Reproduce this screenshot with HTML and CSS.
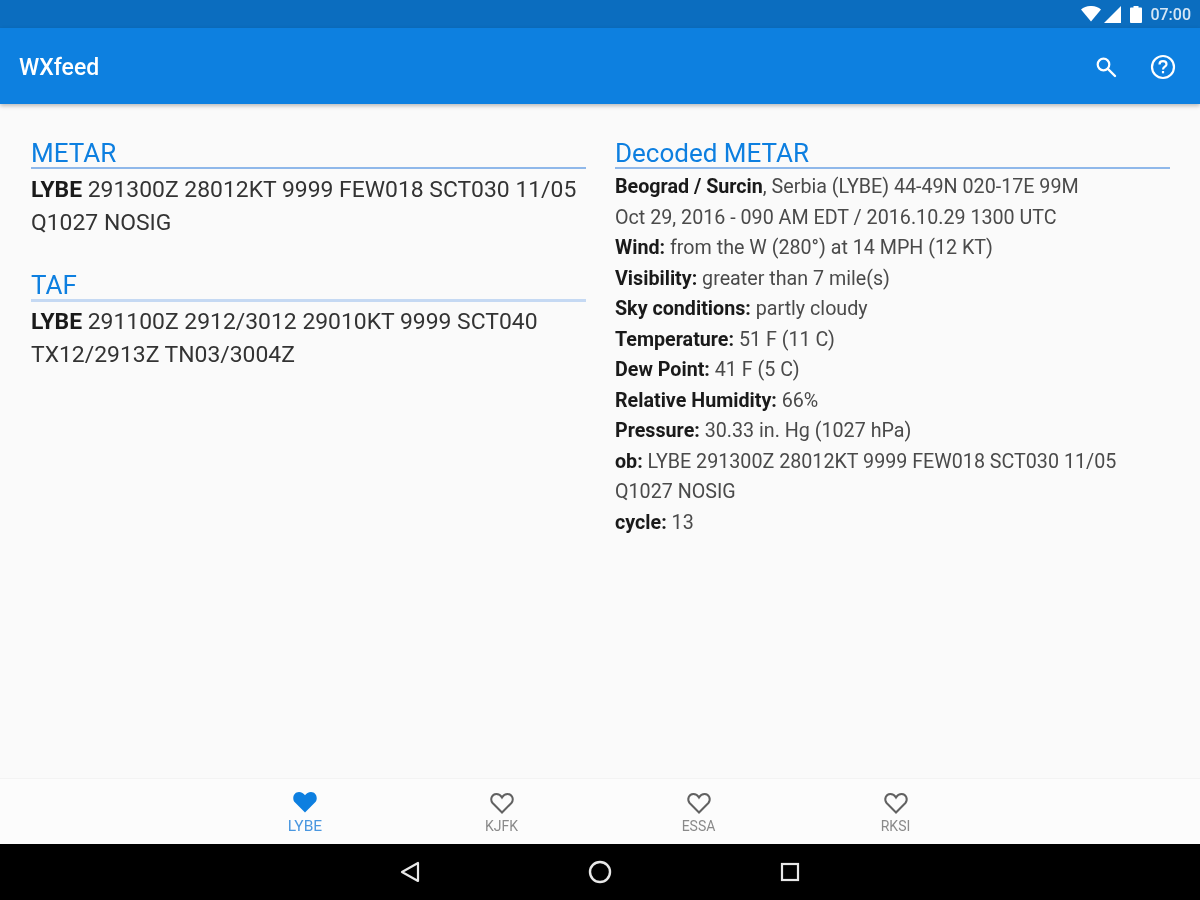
FILE: index.html
```html
<!DOCTYPE html>
<html lang="en">
<head>
<meta charset="utf-8">
<title>WXfeed</title>
<link rel="stylesheet" href="styles.css">
</head>
<body>
<div class="screen">
  <div class="statusbar">
    <svg class="st-wifi" width="20" height="16" viewBox="0 0 20 16"><path d="M0 3.500C5.500-1.200 14.500-1.200 20 3.500L10 15.500Z" fill="#fff"/></svg>
    <svg class="st-signal" width="17" height="17" viewBox="0 0 17 17"><path d="M0 17L17 0V17Z" fill="#fff"/></svg>
    <svg class="st-batt" width="12" height="18" viewBox="0 0 12 18"><path d="M0 3.500C0 3 .5 2.500 1 2.500H3.500V1H8.500V2.500H11C11.500 2.500 12 3 12 3.500V17C12 17.500 11.500 18 11 18H1C.5 18 0 17.500 0 17Z" fill="#fff"/></svg>
    <span class="st-time">07:00</span>
  </div>
  <header class="appbar">
    <div class="title">WXfeed</div>
    <div class="actions">
      <svg width="24" height="24" viewBox="0 0 24 24"><circle cx="9.500" cy="9.500" r="5.800" fill="none" stroke="#fff" stroke-width="2.200"/><path d="M14 14L21 21" stroke="#fff" stroke-width="2.400" stroke-linecap="round"/></svg>
      <svg width="26" height="26" viewBox="0 0 26 26"><circle cx="13" cy="13" r="11" fill="none" stroke="#fff" stroke-width="2.200"/><path d="M9.500 10.500C9.500 8.500 11 7.200 13 7.200C15 7.200 16.500 8.500 16.500 10.300C16.500 12.700 13 12.800 13 15.500" fill="none" stroke="#fff" stroke-width="2.200"/><rect x="11.900" y="17" width="2.200" height="2.300" fill="#fff"/></svg>
    </div>
  </header>
  <main class="content">
    <section class="col">
      <h2 class="head">METAR</h2>
      <p class="raw"><b>LYBE</b> 291300Z 28012KT 9999 FEW018 SCT030 11/05 Q1027 NOSIG</p>
      <h2 class="head head-next">TAF</h2>
      <p class="raw"><b>LYBE</b> 291100Z 2912/3012 29010KT 9999 SCT040 TX12/2913Z TN03/3004Z</p>
    </section>
    <section class="col">
      <h2 class="head">Decoded METAR</h2>
      <div class="decoded">
        <div><b>Beograd / Surcin</b>, Serbia (LYBE) 44-49N 020-17E 99M</div>
        <div>Oct 29, 2016 - 090 AM EDT / 2016.10.29 1300 UTC</div>
        <div><b>Wind:</b> from the W (280°) at 14 MPH (12 KT)</div>
        <div><b>Visibility:</b> greater than 7 mile(s)</div>
        <div><b>Sky conditions:</b> partly cloudy</div>
        <div><b>Temperature:</b> 51 F (11 C)</div>
        <div><b>Dew Point:</b> 41 F (5 C)</div>
        <div><b>Relative Humidity:</b> 66%</div>
        <div><b>Pressure:</b> 30.33 in. Hg (1027 hPa)</div>
        <div><b>ob:</b> LYBE 291300Z 28012KT 9999 FEW018 SCT030 11/05 Q1027 NOSIG</div>
        <div><b>cycle:</b> 13</div>
      </div>
    </section>
  </main>
  <nav class="tabs">
    <div class="tab active">
      <svg width="26" height="24" viewBox="0 0 26 24"><path d="M13 22.500L2.800 12.300C-.5 8.500 1.800 2 7 2C9.500 2 11.700 3.300 13 5.200C14.300 3.300 16.500 2 19 2C24.200 2 26.500 8.500 23.200 12.300Z" fill="#0d7fe0"/></svg>
      <span>LYBE</span>
    </div>
    <div class="tab">
      <svg width="26" height="24" viewBox="0 0 26 24"><path d="M13 21.500L3.600 12C.8 8.600 2.800 3 7.300 3C9.700 3 11.800 4.400 13 6.500C14.200 4.400 16.300 3 18.700 3C23.200 3 25.200 8.600 22.400 12Z" fill="none" stroke="#616161" stroke-width="2"/></svg>
      <span>KJFK</span>
    </div>
    <div class="tab">
      <svg width="26" height="24" viewBox="0 0 26 24"><path d="M13 21.500L3.600 12C.8 8.600 2.800 3 7.300 3C9.700 3 11.800 4.400 13 6.500C14.200 4.400 16.300 3 18.700 3C23.200 3 25.200 8.600 22.400 12Z" fill="none" stroke="#616161" stroke-width="2"/></svg>
      <span>ESSA</span>
    </div>
    <div class="tab">
      <svg width="26" height="24" viewBox="0 0 26 24"><path d="M13 21.500L3.600 12C.8 8.600 2.800 3 7.300 3C9.700 3 11.800 4.400 13 6.500C14.200 4.400 16.300 3 18.700 3C23.200 3 25.200 8.600 22.400 12Z" fill="none" stroke="#616161" stroke-width="2"/></svg>
      <span>RKSI</span>
    </div>
  </nav>
  <div class="sysnav">
    <svg width="20" height="22" viewBox="0 0 20 22"><path d="M18 2V20L2 11Z" fill="none" stroke="#e8e8e8" stroke-width="2.200" stroke-linejoin="round"/></svg>
    <svg width="24" height="24" viewBox="0 0 24 24"><circle cx="12" cy="12" r="10" fill="none" stroke="#e8e8e8" stroke-width="2.400"/></svg>
    <svg width="20" height="20" viewBox="0 0 20 20"><rect x="2" y="2" width="16" height="16" fill="none" stroke="#e8e8e8" stroke-width="2.200"/></svg>
  </div>
</div>
</body>
</html>
```
FILE: styles.css
```css
* { box-sizing: border-box; }
html, body { margin: 0; padding: 0; }
body { font-family: Roboto, "Liberation Sans", sans-serif; color: #212121; }
.screen { width: 1200px; height: 900px; display: flex; flex-direction: column; background: #fafafa; overflow: hidden; filter: blur(.6px); }
.statusbar { height: 28px; background: #0b6dbf; display: flex; align-items: center; justify-content: flex-end; padding-right: 9px; flex: none; color: #d5e6f5; }
.st-wifi { margin-right: 3px; }
.st-signal { margin-right: 9px; }
.st-batt { margin-right: 8px; }
.st-time { font-size: 16px; font-weight: 500; }
.appbar { height: 76px; background: #0d80e0; display: flex; align-items: center; justify-content: space-between; padding: 3px 24px 0 19px; flex: none; box-shadow: 0 2px 4px rgba(0,0,0,.25); position: relative; }
.title { color: #fff; font-size: 23px; font-weight: 500; }
.actions { display: flex; align-items: center; gap: 32px; margin-top: -2px; }
.content { flex: 1; display: grid; grid-template-columns: 555px 555px; column-gap: 29px; padding: 33px 30px 0 31px; align-items: start; }
.head { margin: 0; font-size: 26px; font-weight: 400; line-height: 28px; padding-top: 2px; color: #0d7fe0; border-bottom: 2px solid #8fb8ea; }
.head-next { margin-top: 30.500px; padding-top: 1.500px; border-bottom: 3px solid #c5d9f3; }
.raw { margin: 0; font-size: 22.900px; line-height: 33px; padding-top: 3.500px; color: #333; }
.decoded { font-size: 19.700px; line-height: 30.500px; color: #4a4a4a; padding-top: 3px; }
.decoded b, .raw b { font-weight: 700; color: #1a1a1a; }
.tabs { height: 66px; flex: none; display: flex; justify-content: center; background: #fcfcfc; border-top: 1px solid #f3f3f3; }
.tab { width: 197px; display: flex; flex-direction: column; align-items: center; padding-top: 12px; font-size: 14px; color: #8a8a8a; }
.tab span { margin-top: 3px; }
.tab.active { color: #4a97e0; font-size: 15.500px; padding-top: 11px; padding-left: 1px; }
.tab.active span { margin-top: 3px; }
.sysnav { height: 56px; flex: none; background: #000; display: flex; align-items: center; justify-content: center; gap: 168px; }
```
